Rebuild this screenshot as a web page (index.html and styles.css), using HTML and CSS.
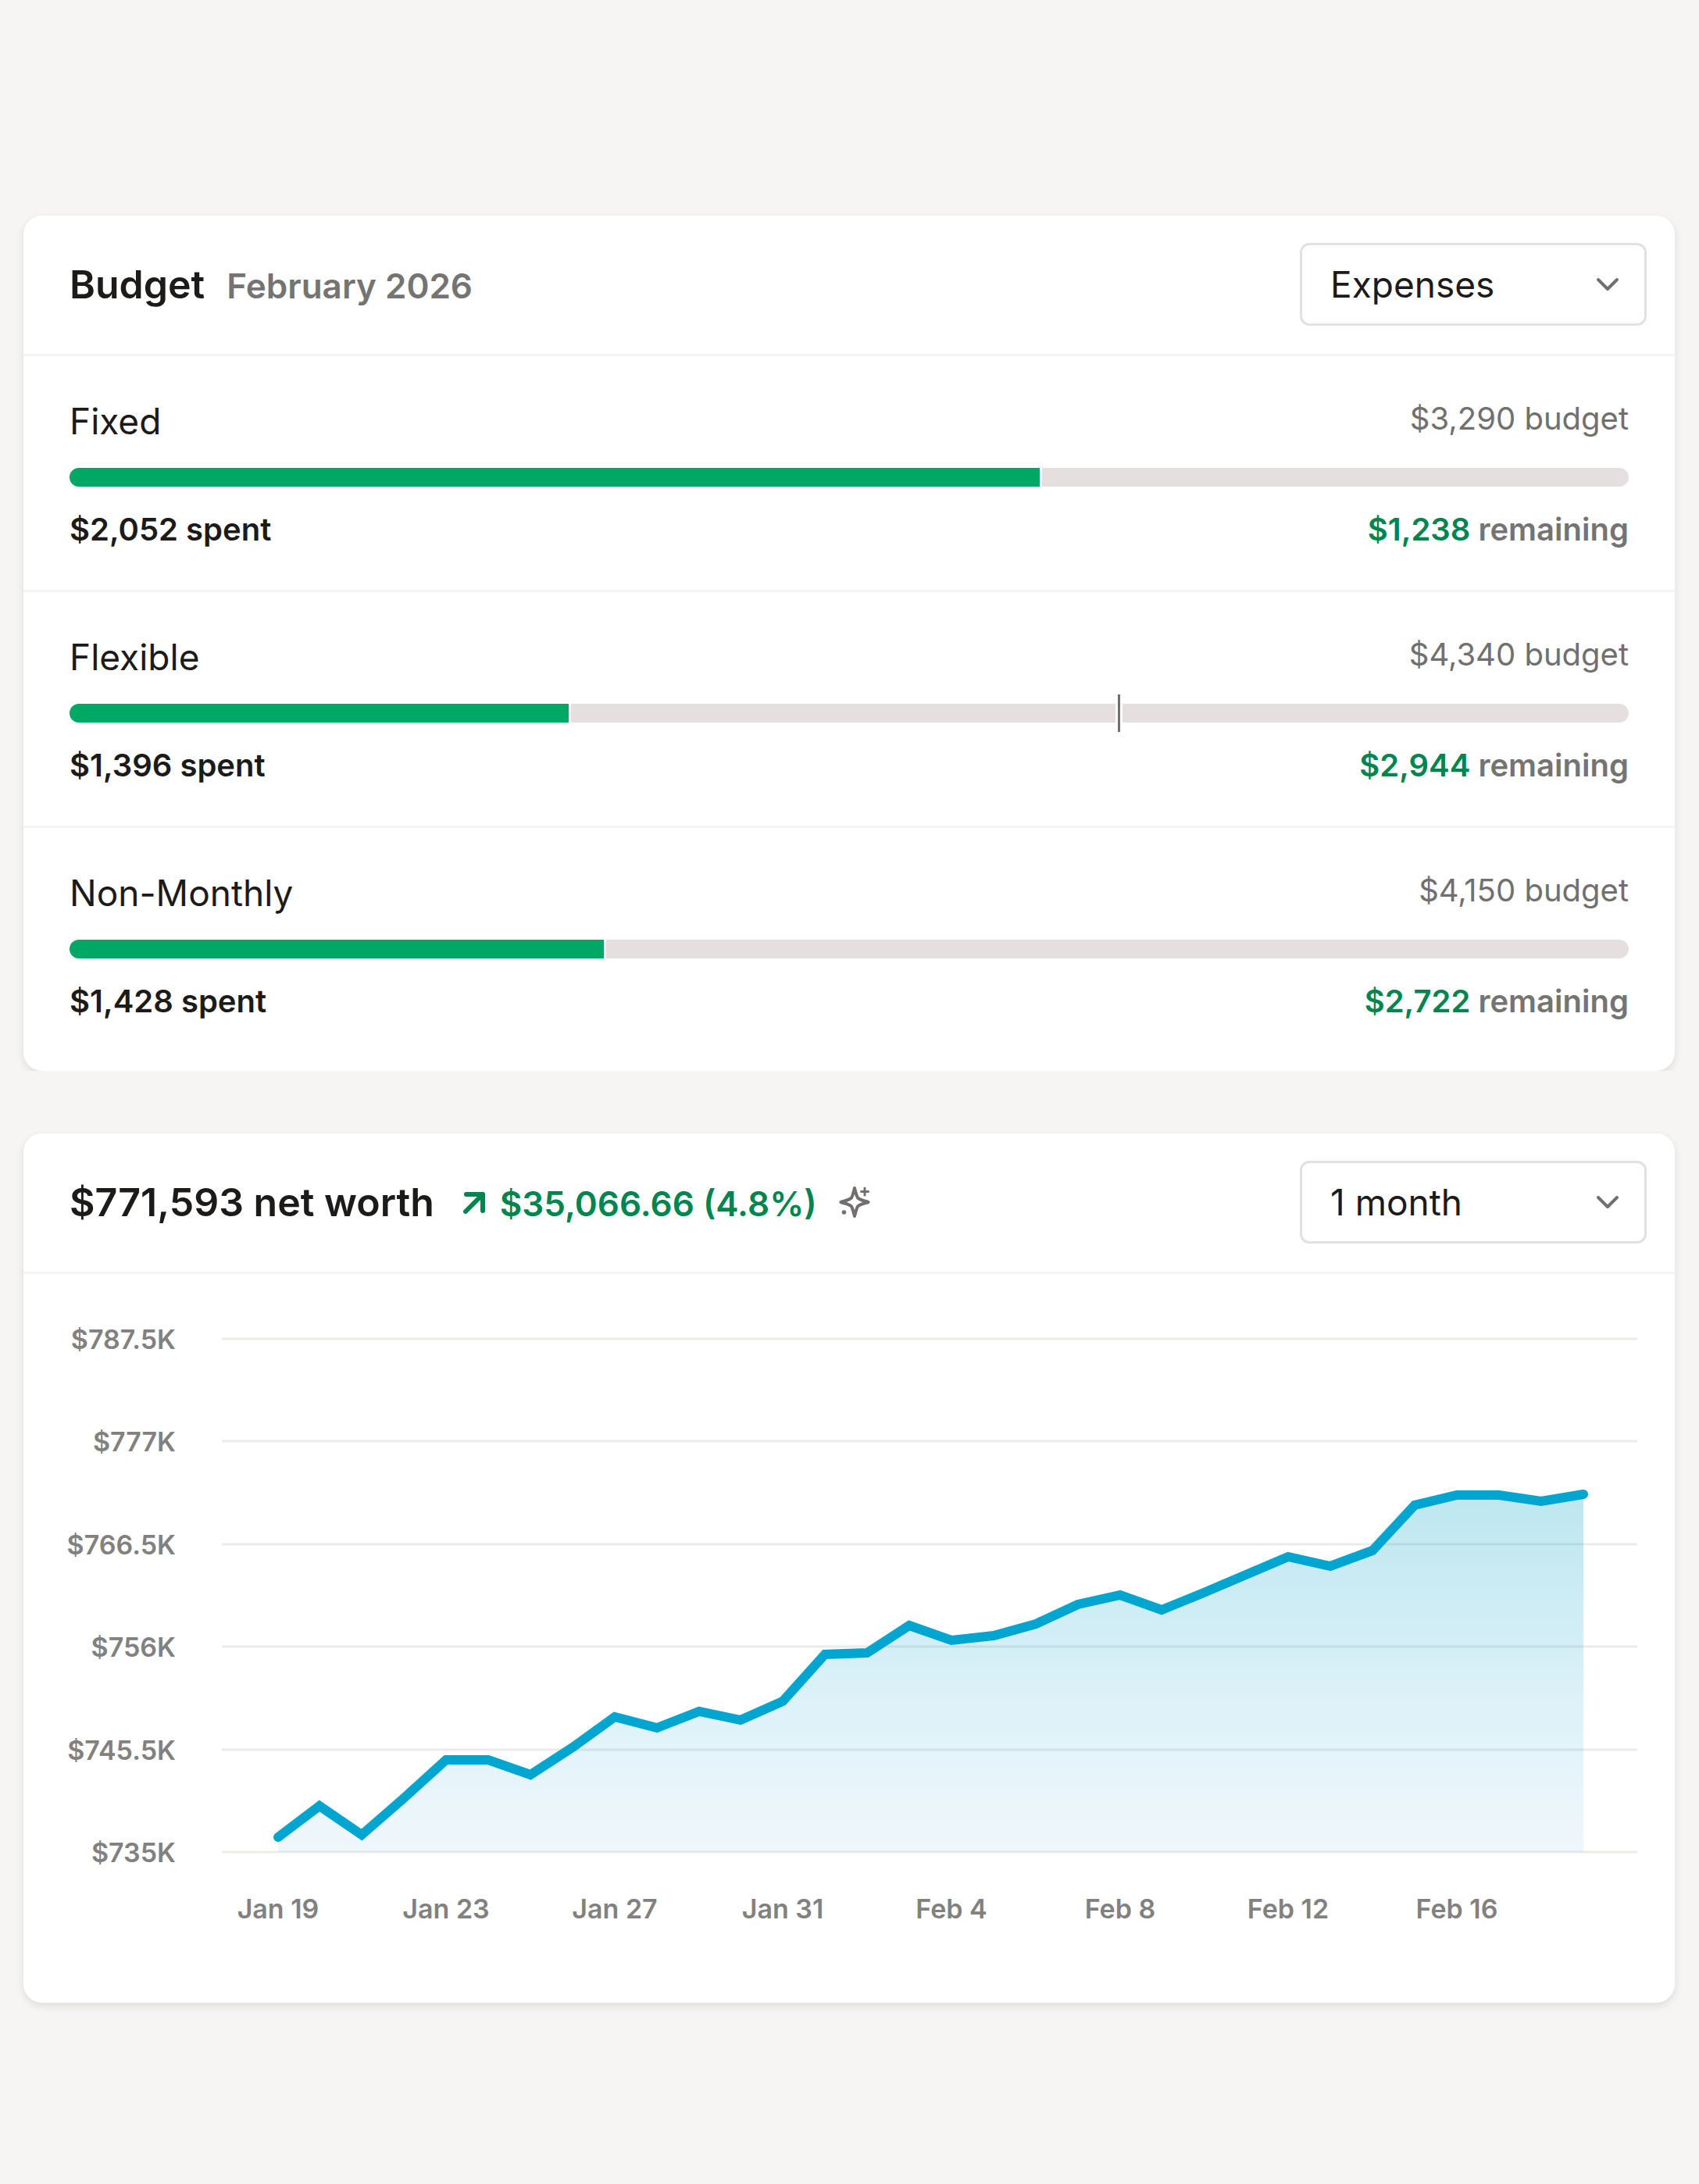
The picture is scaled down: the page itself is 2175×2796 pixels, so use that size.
FILE: index.html
```html
<!DOCTYPE html>
<html lang="en">
<head>
  <meta charset="UTF-8" />
  <title>Budget and net worth</title>
  <link rel="stylesheet" href="styles.css">
</head>
<body>

  <main class="dashboard">

    <section class="card card-budget">
      <header class="card-header">
        <div class="title">
          <h2>Budget</h2>
          <span class="period">February 2026</span>
        </div>
        <div class="dropdown">
          <select aria-label="Budget type">
            <option>Expenses</option>
            <option>Income</option>
          </select>
          <svg class="chevron" viewBox="0 0 30 18" aria-hidden="true"><path d="M3 3l12 12L27 3" /></svg>
        </div>
      </header>

      <div class="budget-row">
        <div class="line">
          <h3>Fixed</h3>
          <span class="amount">$3,290 budget</span>
        </div>
        <div class="bar">
          <div class="fill" style="width: 62.37%"></div>
        </div>
        <div class="line totals">
          <span>$2,052 spent</span>
          <span class="remaining"><b>$1,238</b> remaining</span>
        </div>
      </div>

      <div class="budget-row">
        <div class="line">
          <h3>Flexible</h3>
          <span class="amount">$4,340 budget</span>
        </div>
        <div class="bar">
          <div class="fill" style="width: 32.17%"></div>
          <div class="marker" style="left: 67.3%"></div>
        </div>
        <div class="line totals">
          <span>$1,396 spent</span>
          <span class="remaining"><b>$2,944</b> remaining</span>
        </div>
      </div>

      <div class="budget-row">
        <div class="line">
          <h3>Non-Monthly</h3>
          <span class="amount">$4,150 budget</span>
        </div>
        <div class="bar">
          <div class="fill" style="width: 34.41%"></div>
        </div>
        <div class="line totals">
          <span>$1,428 spent</span>
          <span class="remaining"><b>$2,722</b> remaining</span>
        </div>
      </div>
    </section>

    <section class="card">
      <header class="card-header">
        <div class="title">
          <h2>$771,593 net worth</h2>
          <span class="trend"><svg class="arrow" viewBox="0 0 30 30" aria-hidden="true"><path d="M4 24L26 2M5 2H26V23" /></svg>$35,066.66 (4.8%)</span>
        </div>
        <svg class="sparkle" viewBox="0 0 40 40" aria-hidden="true">
          <path class="star" d="M20 2C21.500 7 22 11 24 14.500C27 17.500 32 18 37.500 20C32 22 27 22.500 24 25.500C22 29 21.500 33 20 38C18.500 33 18 29 16 25.500C13 22.500 8 22 2.500 20C8 18 13 17.500 16 14.500C18 11 18.500 7 20 2Z" />
          <path class="plus" d="M33 2v9M28.500 6.500h9" />
          <circle cx="6.500" cy="33" r="2.800" />
        </svg>
        <div class="dropdown">
          <select aria-label="Time range">
            <option>1 month</option>
            <option>3 months</option>
            <option>1 year</option>
          </select>
          <svg class="chevron" viewBox="0 0 30 18" aria-hidden="true"><path d="M3 3l12 12L27 3" /></svg>
        </div>
      </header>

      <svg class="chart" viewBox="0 0 2114 933" role="img" aria-label="Net worth over the last month">
        <defs>
          <linearGradient id="area" x1="0" y1="0" x2="0" y2="1">
            <stop offset="0" stop-color="#00a2c0" stop-opacity="0.26" />
            <stop offset="0.7" stop-color="#10a0d4" stop-opacity="0.12" />
            <stop offset="1" stop-color="#2090c8" stop-opacity="0.07" />
          </linearGradient>
        </defs>

        <path class="grid" d="M254 83H2066M254 214H2066M254 346H2066M254 477H2066M254 609H2066M254 740H2066" />

        <g class="axis-y">
          <text x="195" y="96">$787.5K</text>
          <text x="195" y="227">$777K</text>
          <text x="195" y="359">$766.5K</text>
          <text x="195" y="490">$756K</text>
          <text x="195" y="622">$745.5K</text>
          <text x="195" y="753">$735K</text>
        </g>

        <path fill="url(#area)" d="M326 721L379 681L433 718L487 671L541 622L595 622L649 641L703 606L757 567L811 581L865 560L918 571L972 547L1026 487L1080 485L1134 450L1188 469L1242 463L1296 448L1350 423L1404 411L1457 430L1511 408L1565 385L1619 362L1673 374L1727 354L1781 296L1835 283L1889 283L1943 291L1997 282V740H326Z" />
        <polyline class="series" points="326,721 379,681 433,718 487,671 541,622 595,622 649,641 703,606 757,567 811,581 865,560 918,571 972,547 1026,487 1080,485 1134,450 1188,469 1242,463 1296,448 1350,423 1404,411 1457,430 1511,408 1565,385 1619,362 1673,374 1727,354 1781,296 1835,283 1889,283 1943,291 1997,282" />

        <g class="axis-x">
          <text x="326" y="825">Jan 19</text>
          <text x="541" y="825">Jan 23</text>
          <text x="757" y="825">Jan 27</text>
          <text x="972" y="825">Jan 31</text>
          <text x="1188" y="825">Feb 4</text>
          <text x="1404" y="825">Feb 8</text>
          <text x="1619" y="825">Feb 12</text>
          <text x="1835" y="825">Feb 16</text>
        </g>
      </svg>
    </section>

  </main>

</body>
</html>
```

FILE: styles.css
```css
* {
  box-sizing: border-box;
}
body {
  margin: 0;
  min-height: 100vh;
  background: #f6f5f3;
  color: #1d1b19;
  font-family: Inter, "Liberation Sans", sans-serif;
}
h2, h3 {
  margin: 0;
}
.dashboard {
  display: flex;
  flex-direction: column;
  gap: 80px;
  padding: 276px 31px 200px 30px;
}
.card {
  background: #fff;
  border-radius: 24px;
  box-shadow: 0 4px 10px rgba(70, 40, 40, 0.12);
}
/* no shadow below the first card */
.card-budget {
  padding-bottom: 12px;
  clip-path: inset(-20px -20px 0 -20px);
}

/* header */
.card-header {
  display: flex;
  align-items: center;
  padding: 35px 36px 36px 59px;
  border-bottom: 3px solid #f5f4f3;
}
.title {
  display: flex;
  align-items: baseline;
}
h2 {
  font-size: 50px;
  line-height: 60px;
  font-weight: 600;
}
.period,
.trend {
  font-size: 44px;
  line-height: 56px;
  font-weight: 600;
}
.period {
  margin-left: 28px;
  color: #757472;
}
.trend {
  margin-left: 36px;
  color: #008551;
}
.arrow {
  width: 30px;
  height: 30px;
  margin-right: 18px;
  fill: none;
  stroke: currentColor;
  stroke-width: 6;
  stroke-linecap: round;
  stroke-linejoin: round;
  overflow: visible;
}
.sparkle {
  width: 40px;
  height: 40px;
  margin-left: 28px;
  fill: #71706e;
}
.star,
.plus {
  fill: none;
  stroke: #71706e;
  stroke-width: 4;
  stroke-linejoin: round;
  stroke-linecap: round;
}
.plus {
  stroke-width: 3;
}

/* dropdown */
.dropdown {
  position: relative;
  width: 444px;
  margin-left: auto;
}
.dropdown select {
  display: block;
  width: 100%;
  height: 106px;
  padding: 0 80px 0 36px;
  appearance: none;
  background: #fff;
  border: 3px solid #e5dfdf;
  border-radius: 12px;
  color: #1d1b19;
  font-family: inherit;
  font-size: 46px;
  cursor: pointer;
}
.chevron {
  position: absolute;
  top: 44px;
  right: 35px;
  width: 30px;
  height: 18px;
  fill: none;
  stroke: #71706e;
  stroke-width: 4;
  stroke-linecap: round;
  stroke-linejoin: round;
  pointer-events: none;
}

/* budget rows */
.budget-row {
  padding: 55px 59px 52px;
}
.budget-row + .budget-row {
  border-top: 3px solid #f5f4f3;
}
.line {
  display: flex;
  justify-content: space-between;
  font-size: 40px;
  line-height: 50px;
}
h3 {
  font-size: 46px;
  line-height: 56px;
  font-weight: 400;
}
.amount {
  color: #71706e;
}
.bar {
  position: relative;
  height: 24px;
  margin: 32px 0 30px;
  background: #e5dfdf;
  border-radius: 12px;
}
.fill {
  height: 100%;
  background: #00a866;
  border-right: 3px solid #fff;
  border-radius: 12px 0 0 12px;
}
.marker {
  position: absolute;
  top: -12px;
  width: 9px;
  height: 48px;
  margin-left: -4px;
  background: #71706e;
  border: solid #fff;
  border-width: 0 3px;
}
.totals {
  font-weight: 600;
}
.remaining {
  color: #757472;
}
.remaining b {
  color: #008551;
  font-weight: 600;
}

/* chart */
.chart {
  display: block;
  width: 100%;
  height: auto;
}
.chart text {
  fill: #82817f;
  font-size: 34px;
  font-weight: 600;
}
.axis-y {
  text-anchor: end;
}
.axis-x {
  text-anchor: middle;
}
.grid {
  stroke: #ecebea;
  stroke-width: 3;
}
.series {
  fill: none;
  stroke: #00a6cf;
  stroke-width: 12;
  stroke-linecap: round;
}
```
